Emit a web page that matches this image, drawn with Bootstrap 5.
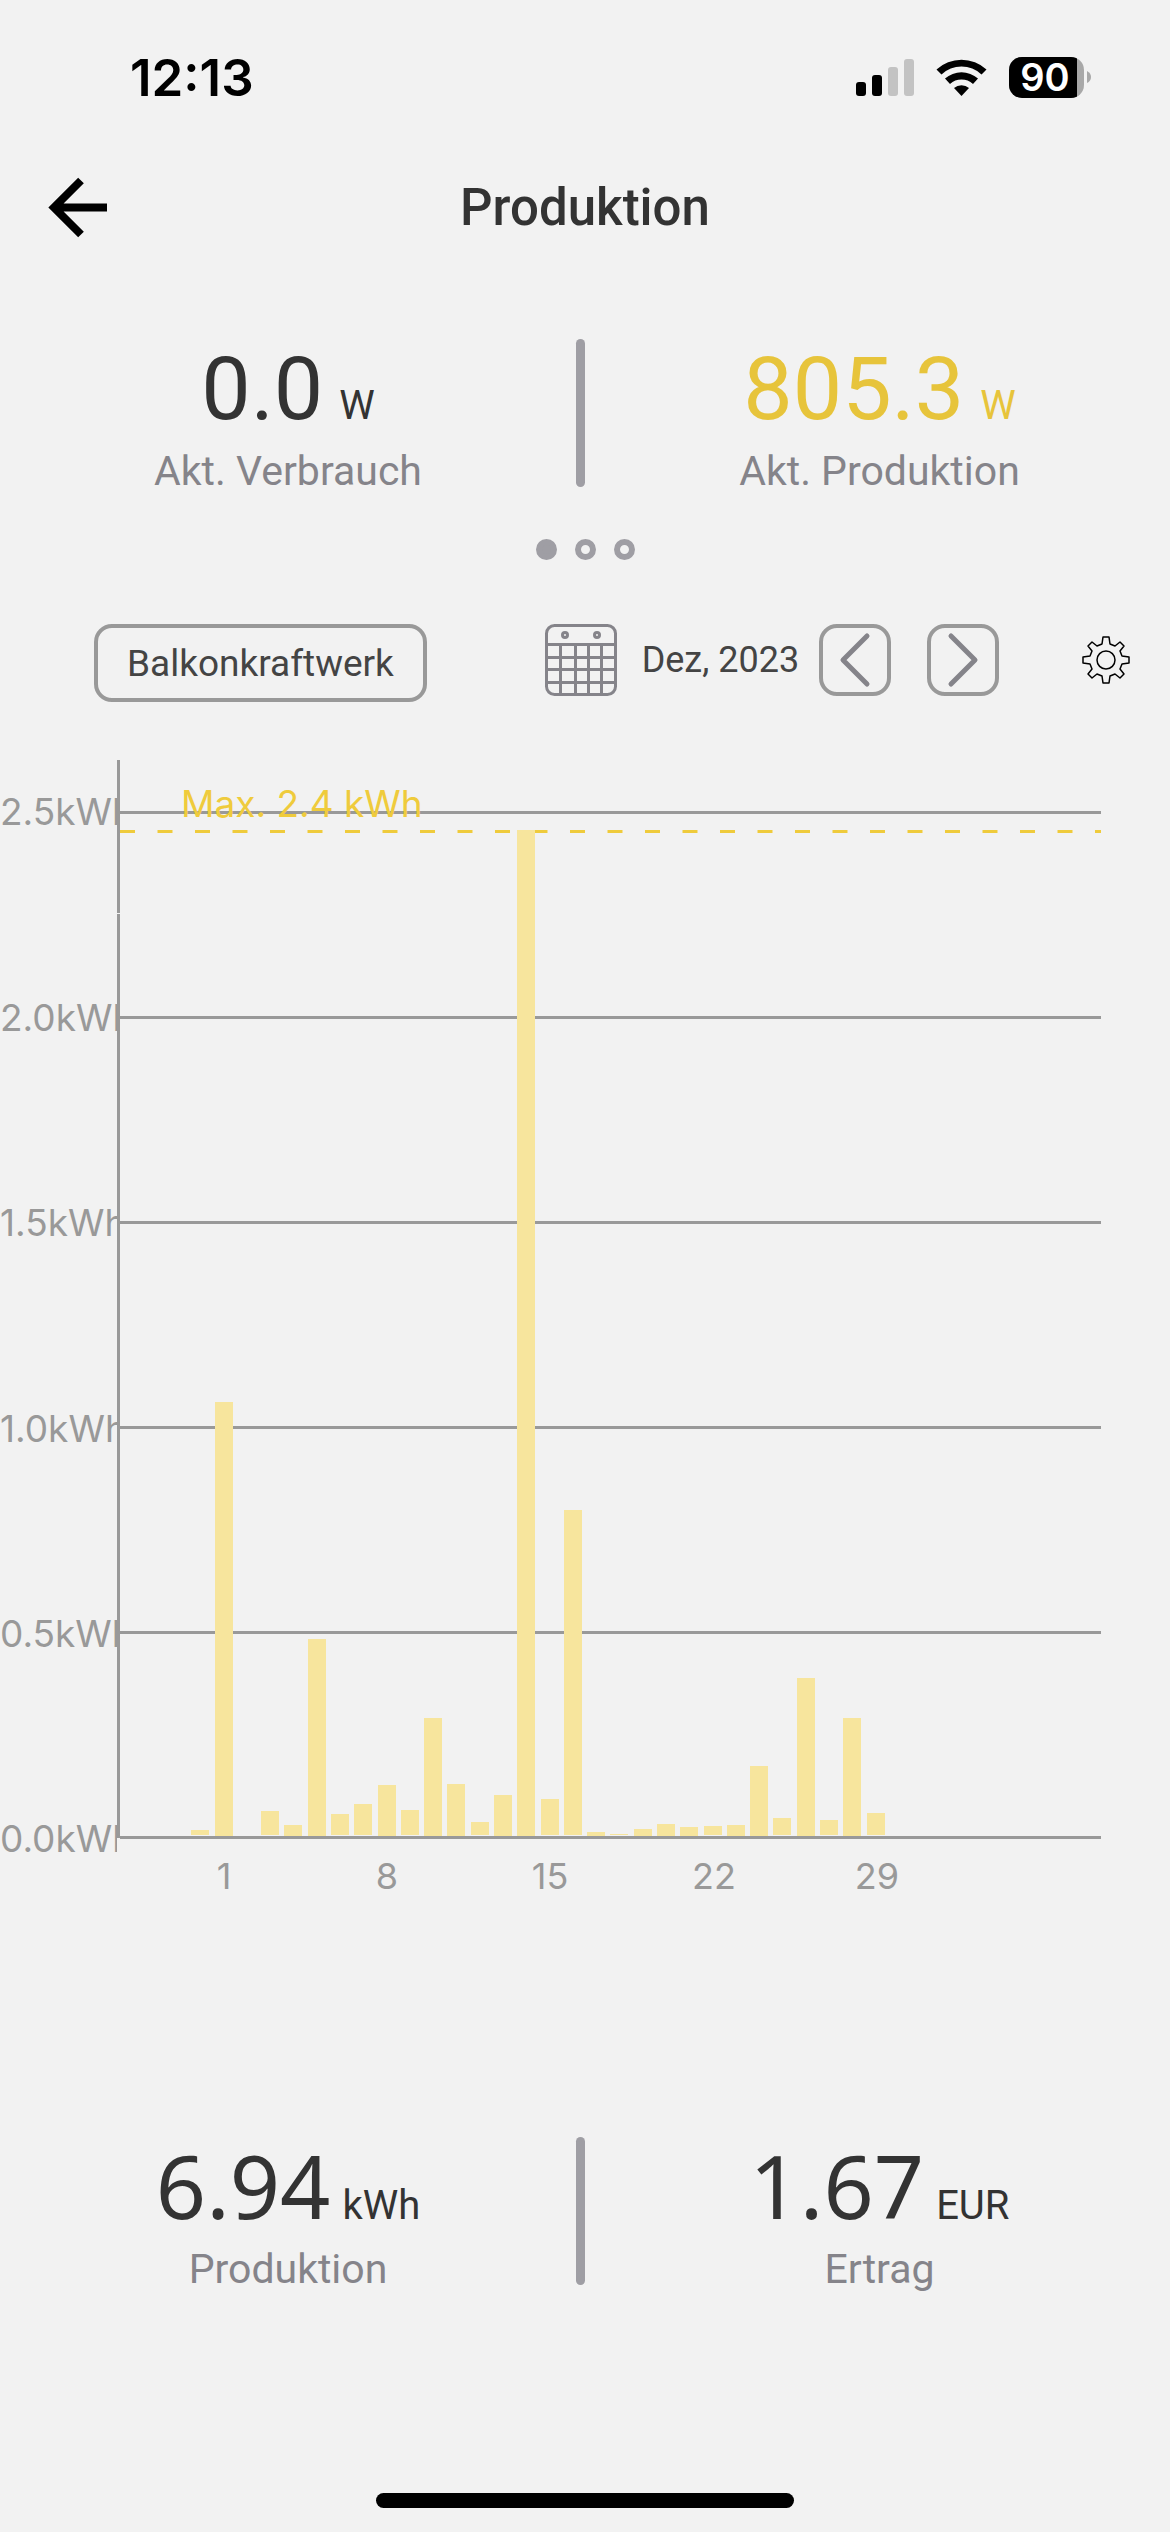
<!DOCTYPE html>
<html lang="de">
<head>
<meta charset="utf-8">
<meta name="viewport" content="width=device-width, initial-scale=1">
<title>Produktion</title>
<link href="https://cdn.jsdelivr.net/npm/bootstrap@5.3.0/dist/css/bootstrap.min.css" rel="stylesheet">
<style>
body{background:#f2f2f2;color:#333;font-family:Roboto,"Liberation Sans",sans-serif;}
.app{min-height:100vh}
svg{display:block}
.status{padding:48px 78px 0 130px;height:108px;font-family:Inter,sans-serif;color:#000}
.clock{font-size:51px;line-height:60px;font-weight:600}
.topbar{display:grid;grid-template-columns:1fr auto 1fr;align-items:start;padding:68px 46px 0;height:231px}
.topbar h1{font-size:51px;line-height:64px;font-weight:500}
.stat-row{display:grid;grid-template-columns:576fr 9fr 585fr;height:148px}
.stat-cell{padding-top:6px}
.divider{height:148px;border-radius:5px;background:#9f9ea4}
.figure-num{font-size:88px;line-height:88px}
.unit{font-size:40px;line-height:40px}
.caption-text{font-size:41px;line-height:48px;color:#85848a;margin-top:14px}
.gold{color:#e7c43b}
.dots{gap:18px;padding-top:52px}
.dots button{width:21px;height:21px;border-radius:50%;border:6px solid #9f9ea4;background:transparent;padding:0}
.dots button.on{background:#9f9ea4}
.toolbar{padding:64px 38px 0 94px}
.plain{border:0;background:transparent;padding:0;color:inherit}
.outline{border:4px solid #999;background:transparent;border-radius:18px;padding:0;color:#444}
.source{font-size:37px;line-height:72px;padding:0 29px;height:78px}
.period{padding-left:36px}
.month{font-size:36px;line-height:48px;color:#444;margin:0 20px 0 24px}
.step{width:72px;height:72px}
.step + .step{margin-left:36px}
.chart{width:100%;height:auto;margin-top:56px}
.chart text{font-family:Inter,sans-serif}
.grid-line{stroke:#999;stroke-width:3}
.ylab{font-size:37px;fill:#999}
.xlab{font-size:36px;fill:#999;text-anchor:middle}
.bars{fill:#f7e59d}
.totals{margin-top:237px}
.totals .digits{font-family:"Noto Sans",sans-serif}
.totals .stat-cell{padding-top:4px}
.totals .caption-text{margin-top:16px}
.home{width:418px;height:15px;border-radius:8px;background:#000;margin-bottom:24px}
</style>
<script src="https://cdn.jsdelivr.net/npm/bootstrap@5.3.0/dist/js/bootstrap.bundle.min.js"></script>
</head>
<body>
<div class="app d-flex flex-column">
<div class="status d-flex justify-content-between align-items-start">
  <div class="clock">12:13</div>
  <svg width="240" height="60" viewBox="852 48 240 60" role="img" aria-label="Signal, WLAN, Akku 90">
    <rect x="856" y="82" width="10" height="14" rx="3"/><rect x="872" y="75" width="10" height="21" rx="3"/>
    <rect x="888" y="67" width="10" height="29" rx="3" fill="#c3c3c3"/><rect x="904" y="59" width="10" height="37" rx="3" fill="#c3c3c3"/>
    <path d="M936.500 69.500a37 37 0 0 1 50 0l-5 5a29 29 0 0 0-40 0z"/>
    <path d="M945 78.500a25 25 0 0 1 33 0l-5 5.500a17 17 0 0 0-23 0z"/>
    <path d="M954 88a12 12 0 0 1 15 0l-7.500 8z"/>
    <clipPath id="bat"><rect x="1009" y="57" width="75" height="41" rx="13"/></clipPath>
    <g clip-path="url(#bat)"><rect x="1009" y="57" width="75" height="41" fill="#a8a8a8"/><rect x="1009" y="57" width="68" height="41"/></g>
    <path d="M1087 71q4 2 4 6t-4 6z" fill="#a8a8a8"/>
    <text x="1045" y="91" text-anchor="middle" font-size="38" font-weight="600" fill="#fff">90</text>
  </svg>
</div>
<header class="topbar">
  <a href="#" aria-label="Zurück"><svg width="64" height="64" viewBox="46 176 64 64" fill="none" stroke="#000" stroke-width="8"><path d="M107 207.500H54M81 180.500 54 207.500 81 234.500"/></svg></a>
  <h1 class="mb-0">Produktion</h1>
</header>
<section class="stat-row">
  <div class="stat-cell text-center"><div class="figure-num d-flex justify-content-center align-items-baseline gap-2"><span class="digits">0.0</span><span class="unit ps-2">W</span></div><div class="caption-text">Akt. Verbrauch</div></div>
  <div class="divider"></div>
  <div class="stat-cell text-center ps-1"><div class="figure-num gold d-flex justify-content-center align-items-baseline gap-2"><span class="digits">805.3</span><span class="unit ps-2">W</span></div><div class="caption-text">Akt. Produktion</div></div>
</section>
<div class="dots d-flex justify-content-center">
  <button class="on" aria-label="Seite 1"></button><button aria-label="Seite 2"></button><button aria-label="Seite 3"></button>
</div>
<div class="toolbar d-flex justify-content-between align-items-start">
  <button class="outline source">Balkonkraftwerk</button>
  <div class="period d-flex align-items-center mx-auto">
    <button class="plain" aria-label="Kalender"><svg width="74" height="72" viewBox="544 624 74 72" fill="none" stroke="#85848a" stroke-width="3"><rect x="546.500" y="625.500" width="69" height="69" rx="8"/><circle cx="565" cy="635" r="2.500"/><circle cx="597" cy="635" r="2.500"/><path d="M546 644.500h70M546 657.500h70M546 669.500h70M546 682.500h70M560.500 645v50M575.500 645v50M588.500 645v50M601.500 645v50"/></svg></button>
    <span class="month">Dez, 2023</span>
    <button class="outline step" aria-label="Vorheriger Monat"><svg width="64" height="64" viewBox="0 0 64 64" fill="none" stroke="#85848a" stroke-width="5" stroke-linecap="round" stroke-linejoin="round"><path d="M44 8 20 32l24 24"/></svg></button>
    <button class="outline step" aria-label="Nächster Monat"><svg width="64" height="64" viewBox="0 0 64 64" fill="none" stroke="#85848a" stroke-width="5" stroke-linecap="round" stroke-linejoin="round"><path d="m20 8 24 24-24 24"/></svg></button>
  </div>
  <button class="plain" aria-label="Einstellungen"><svg width="52" height="72" viewBox="-26 -36 52 72" fill="none" stroke="#000" stroke-width="1.500" stroke-linejoin="round"><circle r="9"/><path d="M-3-23H3L4-16 9-14 14-18 18-14 14-9 16-4 23-3V3L16 4 14 9 18 14 14 18 9 14 4 16 3 23H-3L-4 16-9 14-14 18-18 14-14 9-16 4-23 3V-3L-16-4-14-9-18-14-14-18-9-14-4-16Z"/></svg></button>
</div>
<svg class="chart" viewBox="0 758 1170 1142" role="img" aria-label="Produktion pro Tag, Dezember 2023">
  <clipPath id="gutter"><rect x="0" y="758" width="117" height="1142"/></clipPath>
  <path class="grid-line" d="M118.500 760V913M118.500 914V1838M120 812.500H1101M120 1017.500H1101M120 1222.500H1101M120 1427.500H1101M120 1632.500H1101M120 1837.500H1101"/>
  <g class="ylab" clip-path="url(#gutter)">
    <text x="0" y="825">2.5kWh</text><text x="0" y="1031">2.0kWh</text><text x="0" y="1236">1.5kWh</text><text x="0" y="1442">1.0kWh</text><text x="0" y="1647">0.5kWh</text><text x="0" y="1852">0.0kWh</text>
  </g>
  <path d="M120 831.500H1101" stroke="#efcb3c" stroke-width="3" stroke-dasharray="15 22.500"/>
  <text x="181" y="817" font-size="37" fill="#efcb3c">Max. 2.4 kWh</text>
  <path class="bars" d="M191 1830h18v5h-18zM215 1402h18v434h-18zM261 1811h18v24h-18zM284 1825h18v11h-18zM308 1639h18v197h-18zM331 1814h18v21h-18zM354 1804h18v31h-18zM378 1785h18v51h-18zM401 1810h18v25h-18zM424 1718h18v118h-18zM447 1784h18v52h-18zM471 1822h18v13h-18zM494 1795h18v41h-18zM517 830h18v1006h-18zM541 1799h18v36h-18zM564 1510h18v325h-18zM587 1832h18v4h-18zM610 1834h18v1h-18zM634 1829h18v7h-18zM657 1824h18v12h-18zM680 1827h18v9h-18zM704 1826h18v9h-18zM727 1825h18v11h-18zM750 1766h18v70h-18zM773 1818h18v17h-18zM797 1678h18v158h-18zM820 1820h18v15h-18zM843 1718h18v118h-18zM867 1813h18v22h-18z"/>
  <g class="xlab"><text x="224" y="1889">1</text><text x="387" y="1889">8</text><text x="550" y="1889">15</text><text x="714" y="1889">22</text><text x="877" y="1889">29</text></g>
</svg>
<section class="stat-row totals">
  <div class="stat-cell text-center"><div class="figure-num d-flex justify-content-center align-items-baseline gap-2"><span class="digits">6.94</span><span class="unit ps-1">kWh</span></div><div class="caption-text">Produktion</div></div>
  <div class="divider"></div>
  <div class="stat-cell text-center ps-1"><div class="figure-num d-flex justify-content-center align-items-baseline gap-2"><span class="digits">1.67</span><span class="unit ps-1">EUR</span></div><div class="caption-text">Ertrag</div></div>
</section>
<div class="home mx-auto mt-auto"></div>
</div>
</body>
</html>
